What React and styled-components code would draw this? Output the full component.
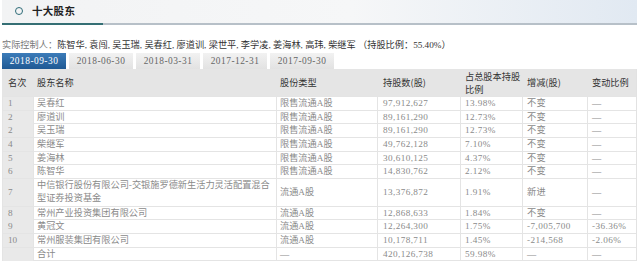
import React from "react";
import styled, { createGlobalStyle, css } from "styled-components";

const Global = createGlobalStyle`
  html, body { margin: 0; padding: 0; background: #ffffff; }
  body {
    font-family: "Liberation Serif", "Noto Sans CJK SC", serif;
    font-size: 9.2px;
    color: #333;
  }
  * { box-sizing: border-box; }
`;

const Page = styled.div`
  width: 640px;
  height: 264px;
  overflow: hidden;
  padding: 0 3px 0 2px;
  display: flex;
  flex-direction: column;
`;

const SectionHeader = styled.div`
  position: relative;
  flex: none;
  height: 25px;
  display: flex;
  align-items: center;
  padding: 0 0 2px 13px;
  background: linear-gradient(to right, #f2f3f4 0%, #f6f7f8 55%, #e1e9f2 100%);
  border-bottom: 2px solid #b7c0c8;
  &::after {
    content: "";
    position: absolute;
    left: 0;
    bottom: -2px;
    width: 101px;
    height: 2px;
    background: #356f74;
  }
`;

const Ring = styled.span`
  width: 8px;
  height: 8px;
  border-radius: 50%;
  border: 1.6px solid #2f6c78;
  margin-right: 9px;
`;

const Title = styled.span`
  font-family: "Noto Sans CJK SC", sans-serif;
  font-size: 10.5px;
  font-weight: 700;
  color: #222;
  letter-spacing: 0.3px;
`;

const Controller = styled.div`
  flex: none;
  margin-top: 12px;
  height: 16px;
  line-height: 16px;
  white-space: nowrap;
  color: #333;
`;

const Label = styled.span`
  color: #777;
`;

const Tabs = styled.div`
  flex: none;
  display: flex;
  gap: 3px;
  height: 16px;
`;

const Tab = styled.div`
  width: 64px;
  display: flex;
  align-items: center;
  justify-content: center;
  font-size: 9.4px;
  letter-spacing: 0.5px;
  color: #666;
  background: linear-gradient(#f2f2f2, #e2e2e2);
  ${(p) =>
    p.$active &&
    css`
      color: #ffffff;
      background: linear-gradient(#3c7cb9, #1f5994);
    `}
`;

const COLS = "31px 243px 101px 83px 62px 65px 50px";

const Table = styled.div`
  flex: none;
  display: flex;
  flex-direction: column;
  width: 635px;
  border-right: 1px solid #e2e2e2;
`;

const Row = styled.div`
  display: grid;
  grid-template-columns: ${COLS};
  height: ${(p) => (p.$head ? 28 : 13.7 * (p.$span || 1))}px;
  background: ${(p) => (p.$head ? "#e5e5e5" : "#ffffff")};
  border-bottom: 1px solid #e4e4e4;
`;

const Cell = styled.div`
  display: flex;
  align-items: center;
  padding-left: ${(p) => p.$pad ?? 4}px;
  line-height: 13px;
  letter-spacing: ${(p) => (p.$num ? 0.4 : 0)}px;
  border-left: 1px solid ${(p) => (p.$head ? "#e5e5e5" : "#e4e4e4")};
  color: ${(p) => (p.$head ? "#333" : "#8a8a8a")};
  white-space: nowrap;
  ${(p) => p.$rank && !p.$head && css`background: #e9e9e9;`}
  ${(p) => p.$head && css`font-family: "Noto Sans CJK SC", sans-serif;`}
`;

const dates = ["2018-09-30", "2018-06-30", "2018-03-31", "2017-12-31", "2017-09-30"];

const rows = [
  ["1", "吴春红", "限售流通A股", "97,912,627", "13.98%", "不变", "—"],
  ["2", "廖道训", "限售流通A股", "89,161,290", "12.73%", "不变", "—"],
  ["2", "吴玉瑞", "限售流通A股", "89,161,290", "12.73%", "不变", "—"],
  ["4", "柴继军", "限售流通A股", "49,762,128", "7.10%", "不变", "—"],
  ["5", "姜海林", "限售流通A股", "30,610,125", "4.37%", "不变", "—"],
  ["6", "陈智华", "限售流通A股", "14,830,762", "2.12%", "不变", "—"],
  [
    "7",
    ["中信银行股份有限公司-交银施罗德新生活力灵活配置混合", "型证券投资基金"],
    "流通A股",
    "13,376,872",
    "1.91%",
    "新进",
    "—",
  ],
  ["8", "常州产业投资集团有限公司", "流通A股", "12,868,633", "1.84%", "不变", "—"],
  ["9", "黄冠文", "流通A股", "12,264,300", "1.75%", "-7,005,700", "-36.36%"],
  ["10", "常州服装集团有限公司", "流通A股", "10,178,711", "1.45%", "-214,568", "-2.06%"],
  ["", "合计", "—", "420,126,738", "59.98%", "—", "—"],
];

const pads = [5, 3, 3, 5, 4, 4, 4];

function Content({ value }) {
  if (Array.isArray(value)) {
    return (
      <span>
        {value[0]}
        <br />
        {value[1]}
      </span>
    );
  }
  return value;
}

export default function App() {
  return (
    <Page>
      <Global />
      <SectionHeader>
        <Ring />
        <Title>十大股东</Title>
      </SectionHeader>
      <Controller>
        <Label>实际控制人：</Label>
        陈智华, 袁闯, 吴玉瑞, 吴春红, 廖道训, 梁世平, 李学凌, 姜海林, 高玮, 柴继军 （持股比例：55.40%）
      </Controller>
      <Tabs>
        {dates.map((d, i) => (
          <Tab key={d} $active={i === 0}>
            {d}
          </Tab>
        ))}
      </Tabs>
      <Table>
        <Row $head>
          <Cell $head $rank $pad={pads[0]}>名次</Cell>
          <Cell $head $pad={pads[1]}>股东名称</Cell>
          <Cell $head $pad={pads[2]}>股份类型</Cell>
          <Cell $head $pad={pads[3]}>持股数(股)</Cell>
          <Cell $head $pad={pads[4]}>
            <span>
              占总股本持股
              <br />
              比例
            </span>
          </Cell>
          <Cell $head $pad={pads[5]}>增减(股)</Cell>
          <Cell $head $pad={pads[6]}>变动比例</Cell>
        </Row>
        {rows.map((r, i) => (
          <Row key={i} $span={Array.isArray(r[1]) ? 2 : 1}>
            {r.map((v, j) => (
              <Cell key={j} $rank={j === 0} $num={j >= 3} $pad={pads[j]}>
                <Content value={v} />
              </Cell>
            ))}
          </Row>
        ))}
      </Table>
    </Page>
  );
}
